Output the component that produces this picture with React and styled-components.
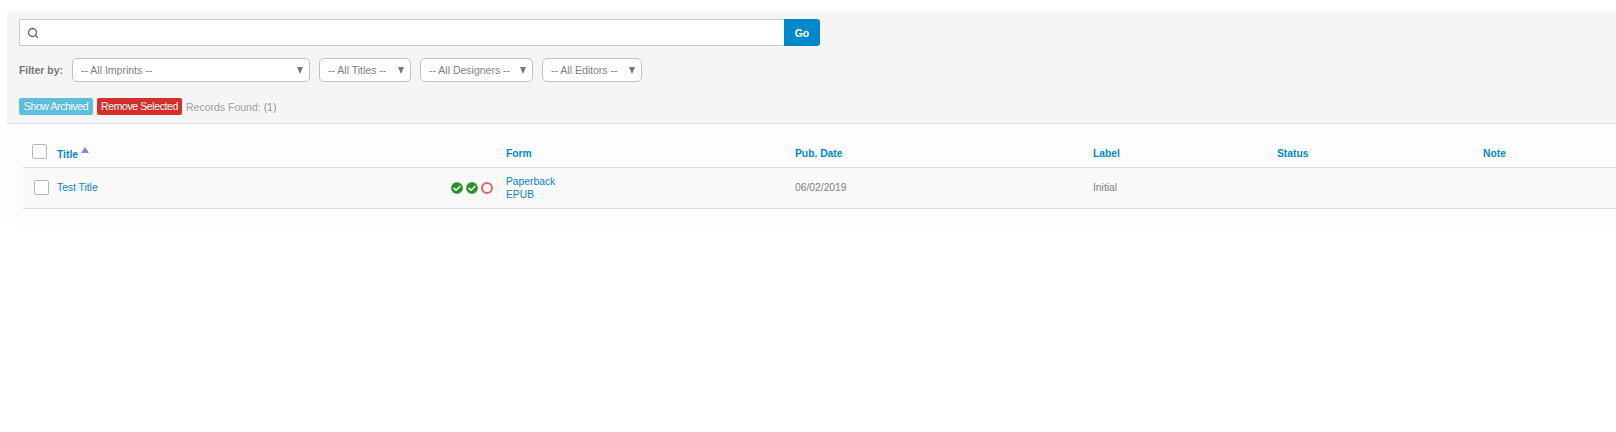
import styled, { createGlobalStyle } from "styled-components";
import { Search } from "lucide-react";
import { FaCheckCircle } from "react-icons/fa";

const GlobalStyle = createGlobalStyle`
  html, body {
    margin: 0;
    padding: 0;
    background: #fff;
    font-family: "Liberation Sans", Arial, sans-serif;
    overflow: hidden;
  }
  * { box-sizing: border-box; }
`;

const Page = styled.div`
  padding: 11px 0 0 7px;
`;
const Panel = styled.div`
  background: #fdfdfd;
  border-radius: 4px 0 0 4px;
  height: 214px;
  overflow: hidden;
`;
const FilterArea = styled.div`
  background: #f5f5f5;
  height: 113px;
  padding: 8px 0 0 12px;
  border-bottom: 1px solid #dcdcdc;
`;
const SearchRow = styled.div`
  display: flex;
  width: 801px;
  height: 27px;
`;
const SearchBox = styled.div`
  flex: 1;
  display: flex;
  align-items: center;
  padding-left: 7px;
  background: #fff;
  border: 1px solid #cacaca;
  border-right: 0;
  color: #666;
`;
const SearchInput = styled.input`
  flex: 1;
  border: 0;
  outline: 0;
  background: transparent;
`;
const GoButton = styled.button`
  width: 36px;
  border: 0;
  padding: 0;
  background: #0088cc;
  color: #fff;
  font: bold 10.5px "Liberation Sans", Arial, sans-serif;
  border-radius: 0 3px 3px 0;
`;
const FilterRow = styled.div`
  display: flex;
  align-items: center;
  gap: 9px;
  margin-top: 12px;
  height: 24px;
`;
const FilterLabel = styled.span`
  width: 44px;
  font-size: 10.4px;
  font-weight: bold;
  color: #777;
  white-space: nowrap;
`;
const SelectWrap = styled.div`
  position: relative;
  width: ${(props) => props.$width}px;
  height: 24px;
  &::after {
    content: "";
    position: absolute;
    right: 7px;
    top: 9px;
    border-left: 3.5px solid transparent;
    border-right: 3.5px solid transparent;
    border-top: 7px solid #777;
  }
`;
const Select = styled.select`
  appearance: none;
  width: 100%;
  height: 100%;
  padding: 0 0 0 8px;
  background: #fff;
  border: 1px solid #c2c2c2;
  border-radius: 5px;
  font: 10.5px "Liberation Sans", Arial, sans-serif;
  color: #808080;
  outline: 0;
`;
const ActionRow = styled.div`
  display: flex;
  align-items: center;
  gap: 4px;
  margin-top: 16px;
  height: 17px;
`;
const ActionButton = styled.button`
  height: 17px;
  width: ${(props) => props.$width}px;
  padding: 0 0 1px;
  border: 0;
  border-radius: 2px;
  background: ${(props) => props.$bg};
  color: #fff;
  font: 10.5px "Liberation Sans", Arial, sans-serif;
  letter-spacing: -0.4px;
  text-shadow: 0 -1px 0 rgba(0, 0, 0, 0.15);
  white-space: nowrap;
`;
const Records = styled.span`
  font-size: 10.5px;
  color: #a0a0a0;
  span {
    color: #7a9aa8;
  }
`;

const TableWrap = styled.div`
  padding: 0 0 0 16px;
`;
const Table = styled.table`
  width: 1593px;
  border-collapse: collapse;
  table-layout: fixed;
`;
const HeadRow = styled.tr`
  height: 43px;
  border-bottom: 1px solid #dcdcdc;
`;
const BodyRow = styled.tr`
  height: 41px;
  background: #f9f9f9;
  border-bottom: 1px solid #dcdcdc;
`;
const Th = styled.th`
  width: ${(props) => props.$width}px;
  padding: ${(props) => props.$top || 17}px 0 0;
  text-align: left;
  font-size: 10.3px;
  font-weight: bold;
  color: #0088cc;
`;
const Td = styled.td`
  padding: 0;
  font-size: 10.3px;
  color: #808080;
  line-height: 14px;
`;
const CheckBox = styled.span`
  display: block;
  width: 15px;
  height: 15px;
  margin-left: ${(props) => props.$left}px;
  background: #fff;
  border: 1px solid #b5b5b5;
  border-radius: 2px;
`;
const SortArrow = styled.span`
  display: inline-block;
  margin-left: 3px;
  vertical-align: 5px;
  border-left: 4px solid transparent;
  border-right: 4px solid transparent;
  border-bottom: 6px solid #7d86d8;
`;
const TitleCell = styled.div`
  display: flex;
  align-items: center;
  justify-content: space-between;
`;
const TitleLink = styled.a`
  color: #0a84c8;
`;
const StatusIcons = styled.div`
  display: flex;
  justify-content: flex-end;
  align-items: center;
  gap: 3px;
  padding-right: 13px;
  color: #2a8f2e;
  font-size: 12px;
`;
const OpenCircle = styled.span`
  width: 12px;
  height: 12px;
  border: 2px solid #e06666;
  border-radius: 50%;
`;
const FormLink = styled.a`
  display: block;
  color: #0a84c8;
  line-height: 13px;
`;

const filters = [
  { label: "-- All Imprints --", width: 238 },
  { label: "-- All Titles --", width: 92 },
  { label: "-- All Designers --", width: 113 },
  { label: "-- All Editors --", width: 100 },
];

export default function App() {
  return (
    <Page>
      <GlobalStyle />
      <Panel>
        <FilterArea>
          <SearchRow>
            <SearchBox>
              <Search size={12} strokeWidth={2.6} />
              <SearchInput />
            </SearchBox>
            <GoButton>Go</GoButton>
          </SearchRow>
          <FilterRow>
            <FilterLabel>Filter by:</FilterLabel>
            {filters.map((f) => (
              <SelectWrap key={f.label} $width={f.width}>
                <Select>
                  <option>{f.label}</option>
                </Select>
              </SelectWrap>
            ))}
          </FilterRow>
          <ActionRow>
            <ActionButton $bg="#5bc0de" $width={74}>
              Show Archived
            </ActionButton>
            <ActionButton $bg="#d32f2b" $width={85}>
              Remove Selected
            </ActionButton>
            <Records>
              Records Found: <span>(1)</span>
            </Records>
          </ActionRow>
        </FilterArea>
        <TableWrap>
          <Table>
            <thead>
              <HeadRow>
                <Th $width={34} $top={13}>
                  <CheckBox $left={9} />
                </Th>
                <Th $width={449}>
                  Title
                  <SortArrow />
                </Th>
                <Th $width={289}>Form</Th>
                <Th $width={298}>Pub. Date</Th>
                <Th $width={184}>Label</Th>
                <Th $width={206}>Status</Th>
                <Th>Note</Th>
              </HeadRow>
            </thead>
            <tbody>
              <BodyRow>
                <Td>
                  <CheckBox $left={11} />
                </Td>
                <Td>
                  <TitleCell>
                    <TitleLink>Test Title</TitleLink>
                    <StatusIcons>
                      <FaCheckCircle />
                      <FaCheckCircle />
                      <OpenCircle />
                    </StatusIcons>
                  </TitleCell>
                </Td>
                <Td>
                  <FormLink>Paperback</FormLink>
                  <FormLink>EPUB</FormLink>
                </Td>
                <Td>06/02/2019</Td>
                <Td>Initial</Td>
                <Td />
                <Td />
              </BodyRow>
            </tbody>
          </Table>
        </TableWrap>
      </Panel>
    </Page>
  );
}
